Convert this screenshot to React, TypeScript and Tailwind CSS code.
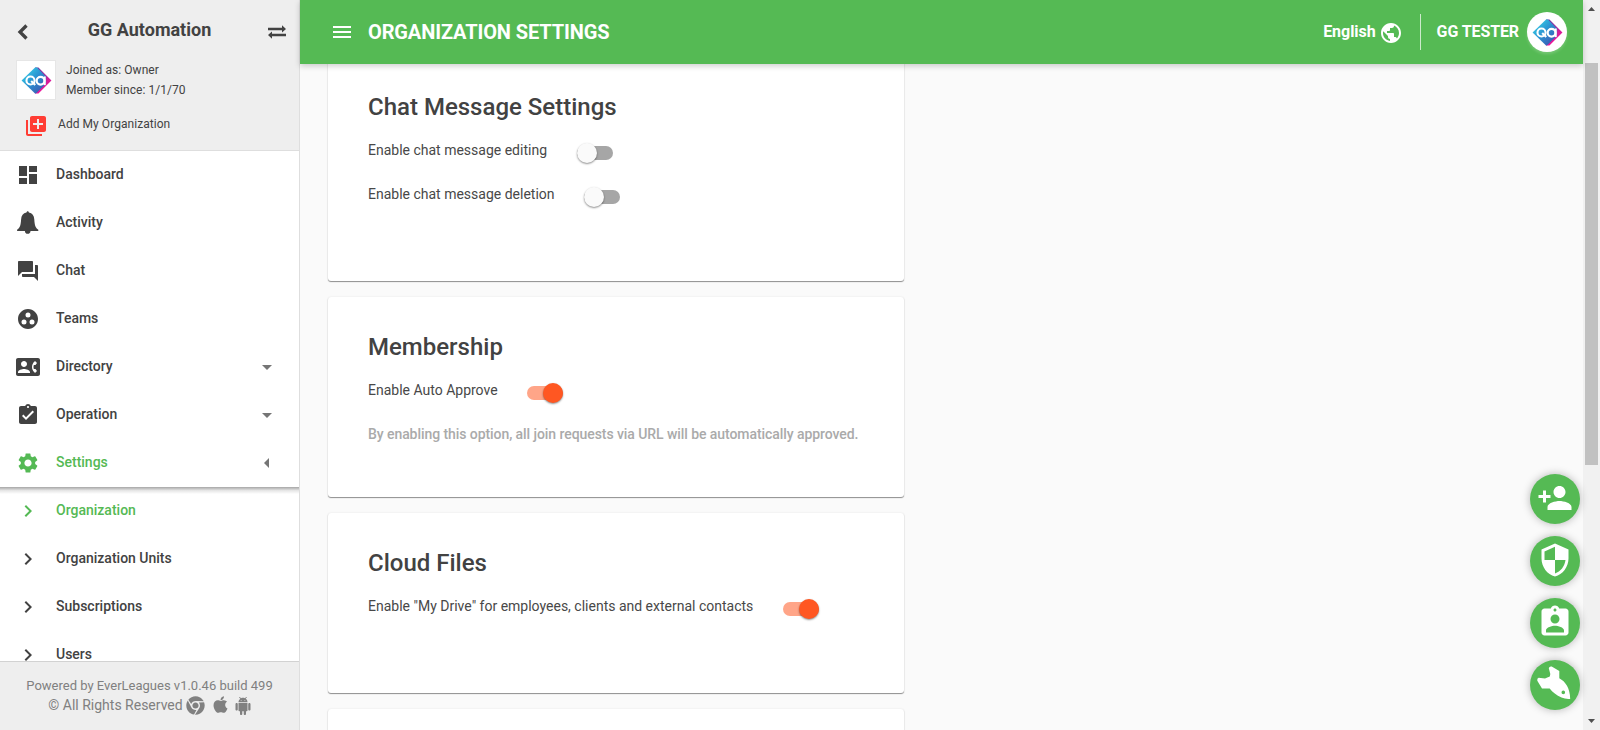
import React from "react";
import {
  MdDashboard, MdForum, MdGroupWork, MdContactPhone, MdAssignmentTurnedIn, MdSettings,
  MdChevronRight, MdArrowDropDown, MdArrowLeft, MdMenu, MdPublic, MdPersonAdd, MdSecurity,
  MdAssignmentInd, MdLibraryAdd,
} from "react-icons/md";
import { FaChrome, FaApple } from "react-icons/fa";

function QaLogo({ id, className }: { id: string; className: string }) {
  return (
    <svg viewBox="0 0 32 28" className={className}>
      <defs>
        <linearGradient id={id + "l"} x1="0" y1="0" x2="1" y2="1">
          <stop offset="0.1" stopColor="#35d0e6" />
          <stop offset="0.5" stopColor="#2b8fd0" />
          <stop offset="0.9" stopColor="#3f55b0" />
        </linearGradient>
        <linearGradient id={id + "r"} x1="0" y1="0" x2="0" y2="1">
          <stop offset="0" stopColor="#6a3aa4" />
          <stop offset="0.5" stopColor="#d81b98" />
          <stop offset="1" stopColor="#f0149a" />
        </linearGradient>
      </defs>
      <path d="M14.500.5h3.500L31.500 14 18 27.500h-3.500Z" fill={"url(#" + id + "r)"} />
      <path d="M14.500.5.5 14l14 13.500h1L26 17V10L16.500.5Z" fill={"url(#" + id + "l)"} />
      <g fill="none" stroke="#fff" strokeWidth="2.200">
        <circle cx="9.800" cy="14" r="4.200" />
        <path d="m10.500 14.500 4.200 4.200" />
        <circle cx="20.200" cy="14.300" r="4" />
        <path d="M24.500 9.800v9" />
      </g>
    </svg>
  );
}

function Bell({ className }: { className?: string }) {
  return (
    <svg viewBox="0 0 24 24" fill="currentColor" className={className}>
      <path d="M11.700.2c.7 0 1.100.6 1.200 1.400 3.400.7 5.200 3.200 5.400 6.800.3 6 1.300 8.400 4 10.400v1.100h-7.800c0 1.700-1.100 2.900-2.800 2.900s-2.800-1.200-2.800-2.900H1.100v-1.100c2.700-2 3.700-4.400 4-10.400.2-3.600 2-6.100 5.400-6.800.1-.8.500-1.400 1.200-1.400z" />
    </svg>
  );
}

function Android({ className }: { className?: string }) {
  return (
    <svg viewBox="0 0 24 24" fill="currentColor" className={className}>
      <path d="M6 18c0 .55.45 1 1 1h1v3.500c0 .83.67 1.500 1.500 1.500s1.500-.67 1.500-1.500V19h2v3.500c0 .83.67 1.500 1.500 1.500s1.500-.67 1.500-1.500V19h1c.55 0 1-.45 1-1V8H6v10zM3.500 8C2.670 8 2 8.670 2 9.500v7c0 .83.67 1.500 1.500 1.500S5 17.330 5 16.500v-7C5 8.670 4.330 8 3.500 8zm17 0c-.83 0-1.500.67-1.500 1.500v7c0 .83.67 1.500 1.500 1.500s1.500-.67 1.500-1.500v-7c0-.83-.67-1.500-1.500-1.500zm-4.970-5.840l1.300-1.300c.2-.2.2-.51 0-.71-.2-.2-.51-.2-.71 0l-1.480 1.480C13.850 1.230 12.950 1 12 1c-.96 0-1.860.23-2.660.63L7.850.15c-.2-.2-.51-.2-.71 0-.2.2-.2.51 0 .71l1.310 1.310C6.970 3.260 6 5.010 6 7h12c0-1.990-.97-3.750-2.470-4.840zM10 5H9V4h1v1zm5 0h-1V4h1v1z" />
    </svg>
  );
}

function Rocket() {
  return (
    <svg viewBox="0 0 50 50" className="size-[50px]" fill="#fff">
      <path fillRule="evenodd" d="M18.800 8.300Q19.300 6 21.700 6.500L29.300 11V18.300C35.500 21.500 40 28.500 40.200 38.900Q35.500 39.300 31.500 37.600C26.500 35 22.500 32.500 19.700 28.500H12L7.300 20.700Q6.800 18.200 8.700 17.700L15 18.600 19.800 16.500 20.300 14ZM33.300 30.600A1.800 1.800 0 1 0 33.300 34.200 1.800 1.800 0 0 0 33.300 30.600Z" />
    </svg>
  );
}

const mainNav = [
  { label: "Dashboard", Icon: MdDashboard },
  { label: "Activity", Icon: Bell },
  { label: "Chat", Icon: MdForum },
  { label: "Teams", Icon: MdGroupWork },
  { label: "Directory", Icon: MdContactPhone, more: true },
  { label: "Operation", Icon: MdAssignmentTurnedIn, more: true },
];
const subNav = ["Organization", "Organization Units", "Subscriptions", "Users"];

function Toggle({ on }: { on?: boolean }) {
  return (
    <span className={"ml-[29.8px] mt-[5px] flex h-3.5 w-9 items-center rounded-full " + (on ? "justify-end bg-[#ffa588]" : "bg-[#a6a6a6]")}>
      <span className={"size-5 shrink-0 rounded-full shadow-[0_1px_2px_rgba(0,0,0,0.45)] " + (on ? "bg-[#ff5722]" : "bg-[#fafafa]")} />
    </span>
  );
}

function Row({ text, on }: { text: string; on?: boolean }) {
  return (
    <div className="flex h-11 items-center">
      <span className="text-sm text-[#484848]">{text}</span>
      <Toggle on={on} />
    </div>
  );
}

function Card({ title, className, children }: { title?: string; className: string; children?: React.ReactNode }) {
  return (
    <section className={"w-[576px] shrink-0 rounded-[3px] bg-white px-10 pt-[34px] shadow-[0_1px_1px_rgba(0,0,0,0.42),0_0_2px_rgba(0,0,0,0.1)] " + className}>
      <h2 className="h-[37px] text-2xl leading-8 font-medium">{title}</h2>
      {children}
    </section>
  );
}

export default function App() {
  return (
    <div className="flex h-[730px] w-[1600px] overflow-hidden bg-[#fafafa] font-[Roboto,sans-serif] text-[#424242]">
      <aside className="flex w-[300px] shrink-0 flex-col border-r border-[#dedede] bg-white">
        <div className="flex h-[151px] shrink-0 flex-col border-b border-[#dedede] bg-[#eeeeee]">
          <div className="flex h-[60px] items-center pr-3 pl-[17px]">
            <svg viewBox="0 0 11 16" className="mt-[3px] h-4 w-[11px]" fill="none" stroke="currentColor" strokeWidth="3.300">
              <path d="M9.500 1.500 3 8l6.500 6.500" />
            </svg>
            <h1 className="flex-1 pl-[3px] text-center text-lg font-bold">GG Automation</h1>
            <svg viewBox="0 0 19 14" className="mt-[3px] h-3.5 w-[19px]" fill="currentColor">
              <path d="M0 2.800h14V.3L18 4l-4 3.500V5.200H0zM18 8.800H4V6.500L0 10l4 3.700v-2.500h14z" />
            </svg>
          </div>
          <div className="flex h-10 items-center pl-4">
            <div className="flex size-10 items-center justify-center border border-[#e6e6e6] bg-white">
              <QaLogo id="side" className="h-[27px] w-[31px]" />
            </div>
            <div className="ml-2.5 text-xs leading-5 tracking-[0.05px]">
              <p>Joined as: Owner</p>
              <p>Member since: 1/1/70</p>
            </div>
          </div>
          <div className="flex h-[50px] items-center pt-0.5 pl-6">
            <MdLibraryAdd className="size-6 text-[#ff3d34]" />
            <span className="-mt-1 ml-2.5 text-xs tracking-[0.05px]">Add My Organization</span>
          </div>
        </div>
        <nav className="flex min-h-0 flex-1 flex-col overflow-hidden text-sm font-medium">
          {mainNav.map(({ label, Icon, more }) => (
            <div key={label} className="flex h-12 shrink-0 items-center pr-5 pl-4">
              <Icon className="size-6" />
              <span className="ml-4 flex-1 pb-0.5">{label}</span>
              {more && <MdArrowDropDown className="size-6 text-[#757575]" />}
            </div>
          ))}
          <div className="flex h-12 shrink-0 items-center pr-5 pl-4 text-[#54b954]">
            <MdSettings className="size-6" />
            <span className="ml-4 flex-1 pb-0.5">Settings</span>
            <MdArrowLeft className="size-6 text-[#757575]" />
          </div>
          <div className="-mb-[7px] h-[7px] shrink-0 bg-linear-to-b from-black/35 via-black/10 to-transparent" />
          {subNav.map((label, i) => (
            <div key={label} className={"flex h-12 shrink-0 items-center pl-4 " + (i === 0 ? "text-[#54b954]" : "")}>
              <MdChevronRight className="size-6" />
              <span className="ml-4 pb-0.5">{label}</span>
            </div>
          ))}
        </nav>
        <footer className="h-[69px] shrink-0 border-t border-[#d2d2d2] bg-[#eeeeee] pt-3.5 text-center text-[13px] leading-5 text-[#808080]">
          <p>Powered by EverLeagues v1.0.46 build 499</p>
          <p className="flex items-center justify-center pl-px text-sm leading-5">
            <span className="-mt-px">© All Rights Reserved</span>
            <FaChrome className="-mt-px ml-[3px] size-[19px]" />
            <FaApple className="-mt-0.5 ml-1.5 size-[19px]" />
            <Android className="ml-1 size-[18px]" />
          </p>
        </footer>
      </aside>

      <div className="flex min-w-0 flex-1 flex-col">
        <header className="z-10 flex h-16 shrink-0 items-center bg-[#55ba54] pr-4 pl-[30px] text-white shadow-[0_2px_6px_rgba(0,0,0,0.2)]">
          <MdMenu className="size-6" />
          <h1 className="ml-3.5 flex-1 text-xl font-bold tracking-[-0.12px]">ORGANIZATION SETTINGS</h1>
          <span className="text-base font-bold tracking-[-0.05px]">English</span>
          <MdPublic className="mt-px mr-px ml-[3px] size-6" />
          <span className="ml-4 h-9 w-px bg-white/70" />
          <span className="ml-4 text-base font-bold tracking-[-0.1px]">GG TESTER</span>
          <div className="ml-2 flex size-10 items-center justify-center rounded-full bg-white shadow-[0_2px_3px_rgba(255,255,255,0.2)]">
            <QaLogo id="top" className="h-[27px] w-[31px]" />
          </div>
        </header>
        <main className="-mt-[7px] flex min-h-0 flex-1 flex-col gap-4 overflow-hidden pl-7">
          <Card title="Chat Message Settings" className="h-[224px]">
            <Row text="Enable chat message editing" />
            <Row text="Enable chat message deletion" />
          </Card>
          <Card title="Membership" className="h-[200px]">
            <Row text="Enable Auto Approve" on />
            <p className="flex h-11 items-center text-sm font-medium tracking-[-0.068px] text-[#aaaaaa]">
              By enabling this option, all join requests via URL will be automatically approved.
            </p>
          </Card>
          <Card title="Cloud Files" className="h-[180px]">
            <Row text={'Enable "My Drive" for employees, clients and external contacts'} on />
          </Card>
          <Card className="h-[180px]" />
        </main>
      </div>

      <div className="flex w-[17px] shrink-0 flex-col items-center bg-[#f1f1f1]">
        <svg viewBox="0 0 17 17" className="size-[17px]" fill="#505050"><path d="M5 11h7L8.500 7z" /></svg>
        <div className="mt-[46px] h-[402px] w-[13px] bg-[#c1c1c1]" />
        <svg viewBox="0 0 17 17" className="mt-auto size-[17px]" fill="#505050"><path d="M5 6h7l-3.500 4z" /></svg>
      </div>

      <div className="absolute top-[474px] left-[1530px] z-20 flex flex-col gap-3 text-white">
        {[MdPersonAdd, MdSecurity, MdAssignmentInd, null].map((Icon, i) => (
          <button key={i} className="flex size-[50px] items-center justify-center rounded-full bg-[#55ba54] shadow-[0_0_8px_rgba(0,0,0,0.28)]">
            {Icon ? <Icon className="mb-[3px] size-9" /> : <Rocket />}
          </button>
        ))}
      </div>
    </div>
  );
}
